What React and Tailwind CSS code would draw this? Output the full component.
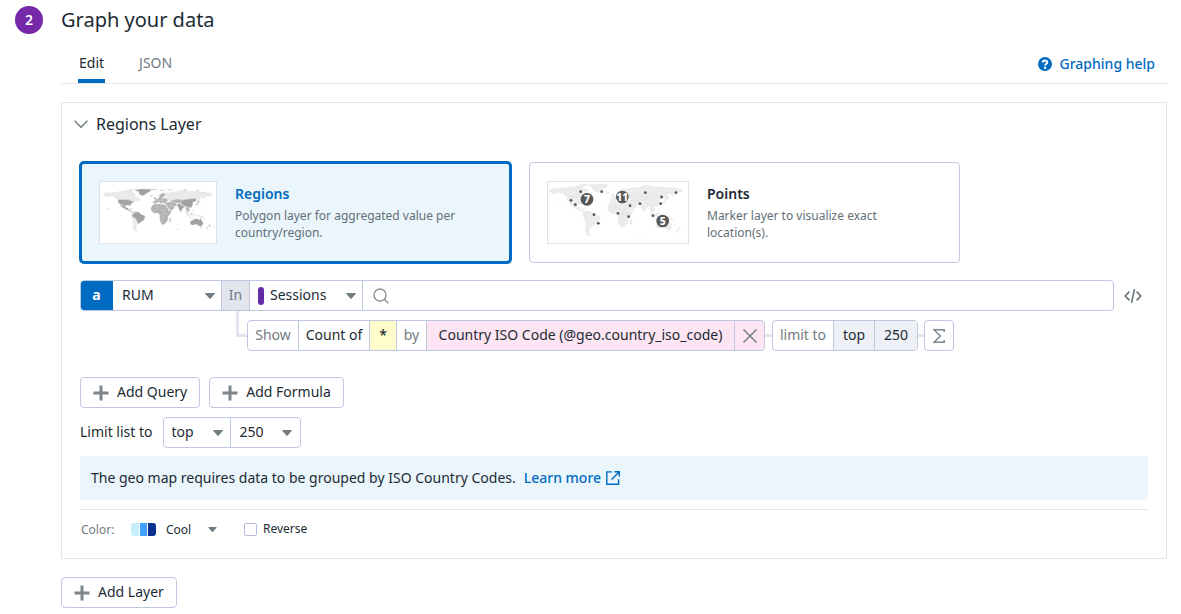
import { useState } from "react";

const LAND = {
  north:
    "M102 133L112 129L122 130L134 128L142 129L150 125L160 126L170 122L186 124L180 130L190 129L198 134L192 138L204 146L212 150L204 153L196 151L186 153L176 150L145 150L139 145L133 140L122 139L112 142L104 138Z M176 120L194 118L188 123Z",
  greenland: "M194 121L214 118L245 119L241 126L231 130L224 136L217 138L209 133L207 126Z",
  usa: "M145 150L176 150L182 153L190 155L197 152L190 158L184 163L181 169L176 166L167 168L161 166L151 164L145 157Z",
  mexico: "M151 165L161 167L167 169L169 175L176 175L175 179L182 182L186 187L178 183L168 179L158 173Z M180 176L188 178L184 179Z",
  southWest: "M186 187L194 184L202 187L195 195L188 203L184 196Z M189 205L199 210L206 220L200 226L199 234L198 240L203 245L195 244L191 236L191 220Z",
  brazil: "M195 188L206 187L214 194L226 199L225 205L221 213L213 217L207 223L202 214L198 207L189 202L188 196Z",
  africa:
    "M250 165L262 162L274 164L289 167L293 176L298 183L305 184L302 192L295 200L295 208L291 216L285 223L277 225L273 217L270 207L271 198L266 190L254 190L245 184L244 174Z M300 208L304 205L301 218L298 216Z",
  europe:
    "M250 161L252 154L258 154L257 149L264 148L270 143L268 137L278 131L286 130L284 139L276 146L285 146L292 148L294 154L287 157L285 162L278 158L276 162L268 156L260 160ZM253 144L258 142L259 149L254 149ZM241 138L249 137L247 141Z",
  russia:
    "M286 131L296 131L306 127L318 128L330 123L345 122L358 126L380 126L402 128L427 132L424 138L408 138L402 148L398 140L389 142L393 153L388 158L384 148L372 146L355 149L338 151L326 148L312 151L302 155L292 148L287 142Z",
  central: "M302 153L312 151L326 148L338 152L332 159L322 160L310 159Z",
  middleEast: "M284 159L302 157L318 160L322 167L316 170L308 168L315 174L305 183L297 177L291 167Z",
  china: "M332 157L340 151L352 149L368 147L379 147L379 154L370 157L369 166L364 174L355 173L347 170L338 167Z",
  india: "M321 167L329 161L338 168L346 171L338 177L333 187L329 181L326 172Z",
  southEast: "M347 172L357 174L360 181L357 187L352 180L354 190L358 196L351 188Z M384 151L388 156L382 166L377 166L384 159Z",
  islands: "M348 189L357 199L353 199Z M360 192L369 187L367 198L361 197Z M358 202L370 204L366 206Z M373 193L377 193L374 200Z M382 196L398 200L405 207L393 204Z M368 179L372 181L370 184Z",
  australia: "M362 215L370 211L377 207L385 208L389 212L392 206L398 215L401 222L395 230L387 228L381 224L368 226L362 224Z M391 232L395 232L393 235Z",
  zealand: "M418 224L423 228L419 231Z M416 231L413 237L410 236Z M407 216L410 218L407 218Z M322 238L324 238L324 240L322 240Z M113 175L116 176L114 178Z",
};

const BORDERS =
  "M254 174H268L274 183L288 180M262 163L264 178M274 165L276 181M287 168L283 190M270 195L292 190M272 207L288 203M280 180V222M246 181H266M288 197L298 190M256 180V190M266 149L276 156M262 153L286 150M275 141L279 158M290 162L305 169M304 157L300 174M318 160L322 167M196 187L203 195M190 193L198 201M336 165L347 169M314 151L313 160M292 175L307 174M353 171L354 184";

function WorldMap({ flat = false }) {
  const dark = flat ? "#ececec" : "#a2a2a2";
  const mid = flat ? "#ececec" : "#b0b0b0";
  const pale = flat ? "#ececec" : "#eaeaea";
  return (
    <g strokeWidth="1" strokeLinejoin="round" stroke={flat ? "#e0e0e0" : "#d0d0d0"}>
      <path d={LAND.north + LAND.russia} fill={pale} />
      <path d={LAND.southWest} fill={pale} />
      <path d={LAND.islands} fill={pale} />
      <path d={LAND.greenland + LAND.usa + LAND.brazil + LAND.china + LAND.australia} fill={dark} />
      <path d={LAND.mexico + LAND.india + LAND.zealand} fill={dark} />
      <path d={LAND.africa + LAND.europe + LAND.middleEast + LAND.central + LAND.southEast} fill={mid} />
      <path d={BORDERS} fill="none" stroke={flat ? "#dedede" : "#dcdcdc"} />
    </g>
  );
}

function RegionsPreview() {
  return (
    <svg viewBox="91 97 348 183" className="h-[61px] w-[116px]" aria-hidden="true">
      <WorldMap />
      <path d="M246 120L262 119M272 123L284 121M296 121L306 120M342 120L352 122M380 122L388 123" stroke="#b5b5b5" strokeWidth="2" />
    </svg>
  );
}

const DOTS = [
  [182, 126], [245, 126], [153, 152], [166, 165], [222, 195], [235, 221], [294, 191], [326, 201],
  [330, 168], [360, 162], [376, 129], [425, 142], [422, 162], [468, 129], [399, 198],
];
const CLUSTERS = [
  [201, 149, "7"],
  [307, 142, "11"],
  [428, 214, "5"],
];

function PointsPreview() {
  return (
    <svg viewBox="84 97 420 183" className="h-[61px] w-[140px]" aria-hidden="true">
      <g transform="translate(-37.5 -41) scale(1.23 1.22)">
        <WorldMap flat />
      </g>
      {DOTS.map(([x, y]) => (
        <circle key={x + "-" + y} cx={x} cy={y} r="4.3" fill="#585858" />
      ))}
      {CLUSTERS.map(([x, y, n]) => (
        <g key={n}>
          <circle cx={x} cy={y} r="19" fill="#585858" />
          <text x={x} y={y + 11} textAnchor="middle" fontSize="31" fontWeight="800" fill="#fff">
            {n}
          </text>
        </g>
      ))}
    </svg>
  );
}

function Caret({ small = false }) {
  return (
    <svg viewBox="0 0 10 6" className={small ? "h-[5px] w-[9px]" : "h-[6px] w-[10px]"} fill="#717c83" aria-hidden="true">
      <path d="M0 .6Q0 0 .7 0H9.3Q10 0 10 .6L5.6 5.6Q5 6.2 4.4 5.6Z" />
    </svg>
  );
}

function Plus() {
  return (
    <svg viewBox="0 0 16 16" className="size-4" stroke="#7c868c" strokeWidth="3" aria-hidden="true">
      <path d="M8 .5V15.5M.5 8H15.5" />
    </svg>
  );
}

function Picker({ label, value, options, className = "", pad = "pl-[9px]", caret = "mr-[7px]" }) {
  return (
    <div className={"grid items-center " + className}>
      <select
        aria-label={label}
        defaultValue={value}
        className={"col-start-1 row-start-1 h-full w-full appearance-none bg-transparent pb-px outline-none " + pad}
      >
        {options.map((o) => (
          <option key={o}>{o}</option>
        ))}
      </select>
      <span className={"pointer-events-none col-start-1 row-start-1 justify-self-end " + caret}>
        <Caret />
      </span>
    </div>
  );
}

function AddButton({ children }) {
  return (
    <button type="button" className="flex h-[31px] items-center gap-2 rounded border border-[#c0c8e1] bg-white px-3">
      <Plus />
      <span className="pb-px">{children}</span>
    </button>
  );
}

function LayerCard({ id, title, text, checked, onSelect, preview }) {
  return (
    <label
      className={
        "flex h-[101px] w-[431px] cursor-pointer items-start rounded " +
        (checked
          ? "border-2 border-[#006bc2] bg-[#eaf5fc] p-[17px] ring ring-[#006bc2]"
          : "border border-[#c0c8e1] bg-white px-[17px] py-[18px]")
      }
    >
      <input type="radio" name="layer-type" value={id} checked={checked} onChange={onSelect} className="sr-only" />
      <span className="shrink-0 border border-[#dfe2ee] bg-white">{preview}</span>
      <span className="ml-[18px] flex w-60 flex-col pt-px">
        <span className={"text-sm leading-6 font-semibold " + (checked ? "text-[#006bc2]" : "")}>{title}</span>
        <span className="mt-px text-xs leading-[17px] text-[#626f77]">{text}</span>
      </span>
    </label>
  );
}

export default function App() {
  const [layer, setLayer] = useState("regions");
  return (
    <main className="flex items-start bg-white pr-3.5 pl-[15px] font-['Noto_Sans',sans-serif] text-sm text-[#1c2b34]">
      <span className="mt-[6px] grid size-7 shrink-0 place-items-center rounded-full bg-[#7628a8] text-sm font-semibold text-white">
        2
      </span>
      <div className="ml-[18px] min-w-0 flex-1">
        <h2 className="text-xl leading-10">Graph your data</h2>

        <div className="flex h-11 items-stretch justify-between border-b border-[#e2e4ee]">
          <div role="tablist" className="flex gap-[33px] pl-[17px]">
            <button type="button" role="tab" aria-selected="true" className="border-b-4 border-[#006bc2] px-px pt-[6px]">
              Edit
            </button>
            <button type="button" role="tab" aria-selected="false" className="border-b-4 border-transparent px-px pt-[6px] text-[#717c83]">
              JSON
            </button>
          </div>
          <a href="#help" className="flex items-center gap-2 pt-1 pr-3 font-medium text-[#006bc2]">
            <svg viewBox="0 0 14 14" className="size-3.5" aria-hidden="true">
              <circle cx="7" cy="7" r="7" fill="currentColor" />
              <path d="M4.7 5.4C4.7 2.9 9.3 2.9 9.3 5.3C9.3 6.9 7.1 6.8 7.1 8.5" fill="none" stroke="#fff" strokeWidth="2" />
              <circle cx="7.1" cy="10.7" r="1.2" fill="#fff" />
            </svg>
            Graphing help
          </a>
        </div>

        <section className="mt-[18px] border border-[#e2e4ee] px-[18px] pb-[9px]">
          <button type="button" aria-expanded="true" className="-ml-[6px] flex h-[42px] items-center gap-2 text-base">
            <svg viewBox="0 0 14 8" className="h-2 w-3.5" fill="none" stroke="#717c83" strokeWidth="1.5" aria-hidden="true">
              <path d="M.6 .8L7 7.2L13.4 .8" />
            </svg>
            Regions Layer
          </button>

          <div className="mt-[17px] flex gap-[18px]">
            <LayerCard
              id="regions"
              title="Regions"
              text="Polygon layer for aggregated value per country/region."
              checked={layer === "regions"}
              onSelect={() => setLayer("regions")}
              preview={<RegionsPreview />}
            />
            <LayerCard
              id="points"
              title="Points"
              text={<>Marker layer to visualize exact<br />location(s).</>}
              checked={layer === "points"}
              onSelect={() => setLayer("points")}
              preview={<PointsPreview />}
            />
          </div>

          <div className="mt-[17px] flex items-center gap-[10px]">
            <div className="flex h-[31px] flex-1 overflow-hidden rounded border border-[#c0c8e1]">
              <span className="-my-px -ml-px grid w-[33px] place-items-center bg-[#006bc2] pb-[2px] font-bold text-white">a</span>
              <Picker label="Source" value="RUM" options={["RUM", "Logs", "Metrics"]} className="w-[109px] border-r border-[#c0c8e1]" caret="mr-[6px]" />
              <span className="grid w-7 place-items-center border-r border-[#c0c8e1] bg-[#e2e4ee] pb-px text-[#717c83]">In</span>
              <div className="flex w-[113px] items-center border-r border-[#c0c8e1] pl-2">
                <span className="h-[18px] w-[6px] rounded-sm bg-[#632ca6]" />
                <Picker label="Event type" value="Sessions" options={["Sessions", "Views", "Actions"]} className="h-full flex-1" pad="pl-[6px]" caret="mr-[6px]" />
              </div>
              <label className="flex flex-1 items-center gap-2 pl-[10px]">
                <svg viewBox="0 0 16 16" className="mt-px size-4" fill="none" stroke="#8b949a" strokeWidth="1.4" aria-hidden="true">
                  <circle cx="7" cy="7" r="6" />
                  <path d="M11.2 11.2L15.3 15.3" />
                </svg>
                <input type="text" aria-label="Search" className="h-full min-w-0 flex-1 outline-none" />
              </label>
            </div>
            <button type="button" aria-label="Edit as code" className="mr-[6px]">
              <svg viewBox="0 0 18 14" className="h-3.5 w-[18px]" fill="none" stroke="#66737a" strokeWidth="1.6" aria-hidden="true">
                <path d="M5.4 2.6L1.2 7L5.4 11.4M12.6 2.6L16.8 7L12.6 11.4M10.5 .2L7.5 13.8" />
              </svg>
            </button>
          </div>

          <div className="flex pl-[156px]">
            <span className="h-[26px] w-[11px] border-b-3 border-l-3 border-[#e2e4ee]" />
            <div className="mt-[9px] flex items-center">
              <div className="flex h-[31px] divide-x divide-[#c0c8e1] overflow-hidden rounded border border-[#c0c8e1]">
                <span className="flex w-[51px] items-center justify-center pb-px text-[#717c83]">Show</span>
                <button type="button" className="w-[71px] pb-px">Count of</button>
                <button type="button" className="w-[27px] bg-[#fffdcb] pb-px font-medium">*</button>
                <span className="flex w-[30px] items-center justify-center pb-px text-[#717c83]">by</span>
                <button type="button" className="w-[308px] bg-[#fee5f4] pb-px">Country ISO Code (@geo.country_iso_code)</button>
                <button type="button" aria-label="Remove group" className="grid w-[29px] place-items-center bg-[#fee5f4]">
                  <svg viewBox="0 0 14 14" className="size-3.5" stroke="#66737a" strokeWidth="1.3" aria-hidden="true">
                    <path d="M.5 .5L13.5 13.5M13.5 .5L.5 13.5" />
                  </svg>
                </button>
              </div>
              <span className="h-[3px] w-[7px] bg-[#e2e4ee]" />
              <div className="flex h-[31px] divide-x divide-[#c0c8e1] overflow-hidden rounded border border-[#c0c8e1]">
                <span className="flex w-[61px] items-center justify-center pb-px text-[#717c83]">limit to</span>
                <button type="button" className="w-[41px] bg-[#eff0f5] pb-px">top</button>
                <button type="button" className="w-[42px] bg-[#eff0f5] pb-px">250</button>
              </div>
              <span className="h-[3px] w-[6px] bg-[#e2e4ee]" />
              <button type="button" aria-label="Add function" className="grid h-[31px] w-[30px] place-items-center rounded border border-[#c0c8e1]">
                <svg viewBox="0 0 12 14" className="h-3.5 w-3" fill="none" stroke="#7c868c" strokeWidth="1.4" aria-hidden="true">
                  <path d="M11.2 3V.8H1L7.4 7L1 13.2H11.2V11" />
                </svg>
              </button>
            </div>
          </div>

          <div className="mt-[26px] flex gap-[9px]">
            <AddButton>Add Query</AddButton>
            <AddButton>Add Formula</AddButton>
          </div>

          <div className="mt-[9px] flex h-[31px] items-center gap-[10px]">
            <span className="pb-px">Limit list to</span>
            <div className="flex h-full divide-x divide-[#c0c8e1] rounded border border-[#c0c8e1]">
              <Picker label="Limit order" value="top" options={["top", "bottom"]} className="w-[67px]" pad="pl-2" />
              <Picker label="Limit count" value="250" options={["250", "100", "50"]} className="w-[69px]" pad="pl-[9px]" caret="mr-2" />
            </div>
          </div>

          <p className="mt-2 flex h-11 items-center rounded bg-[#eaf5fc] px-[11px]">
            The geo map requires data to be grouped by ISO Country Codes.
            <a href="#learn-more" className="ml-2 flex items-center gap-[5px] font-medium text-[#006bc2]">
              Learn more
              <svg viewBox="0 0 14 14" className="size-3.5" fill="none" stroke="currentColor" strokeWidth="1.4" aria-hidden="true">
                <path d="M6 .9H.8V13.2H12.6V8.2M8.4 .8H13.3V5.6M13.1 1L5.6 8.6" />
              </svg>
            </a>
          </p>

          <div className="mt-[9px] flex h-10 items-center border-t border-[#e2e4ee] text-xs">
            <span id="palette" className="w-[51px] pl-px text-[#717c83]">Color:</span>
            <span className="flex h-[13px] w-[25px] gap-px overflow-hidden rounded-[3px]">
              <span className="flex-1 bg-[#c5effc]" />
              <span className="flex-1 bg-[#42a0ff]" />
              <span className="flex-1 bg-[#0a3290]" />
            </span>
            <div className="grid w-[61px] items-center">
              <select aria-labelledby="palette" defaultValue="Cool" className="col-start-1 row-start-1 w-full appearance-none bg-transparent pl-[10px] outline-none">
                <option>Cool</option>
                <option>Warm</option>
              </select>
              <span className="pointer-events-none col-start-1 row-start-1 justify-self-end">
                <Caret small />
              </span>
            </div>
            <label className="ml-[27px] flex items-center gap-[6px]">
              <input type="checkbox" className="size-[13px] appearance-none rounded-xs border border-[#b4bbdc] bg-white checked:bg-[#006bc2]" />
              <span className="pb-[2px]">Reverse</span>
            </label>
          </div>
        </section>

        <div className="mt-[18px] flex">
          <AddButton>Add Layer</AddButton>
        </div>
      </div>
    </main>
  );
}
